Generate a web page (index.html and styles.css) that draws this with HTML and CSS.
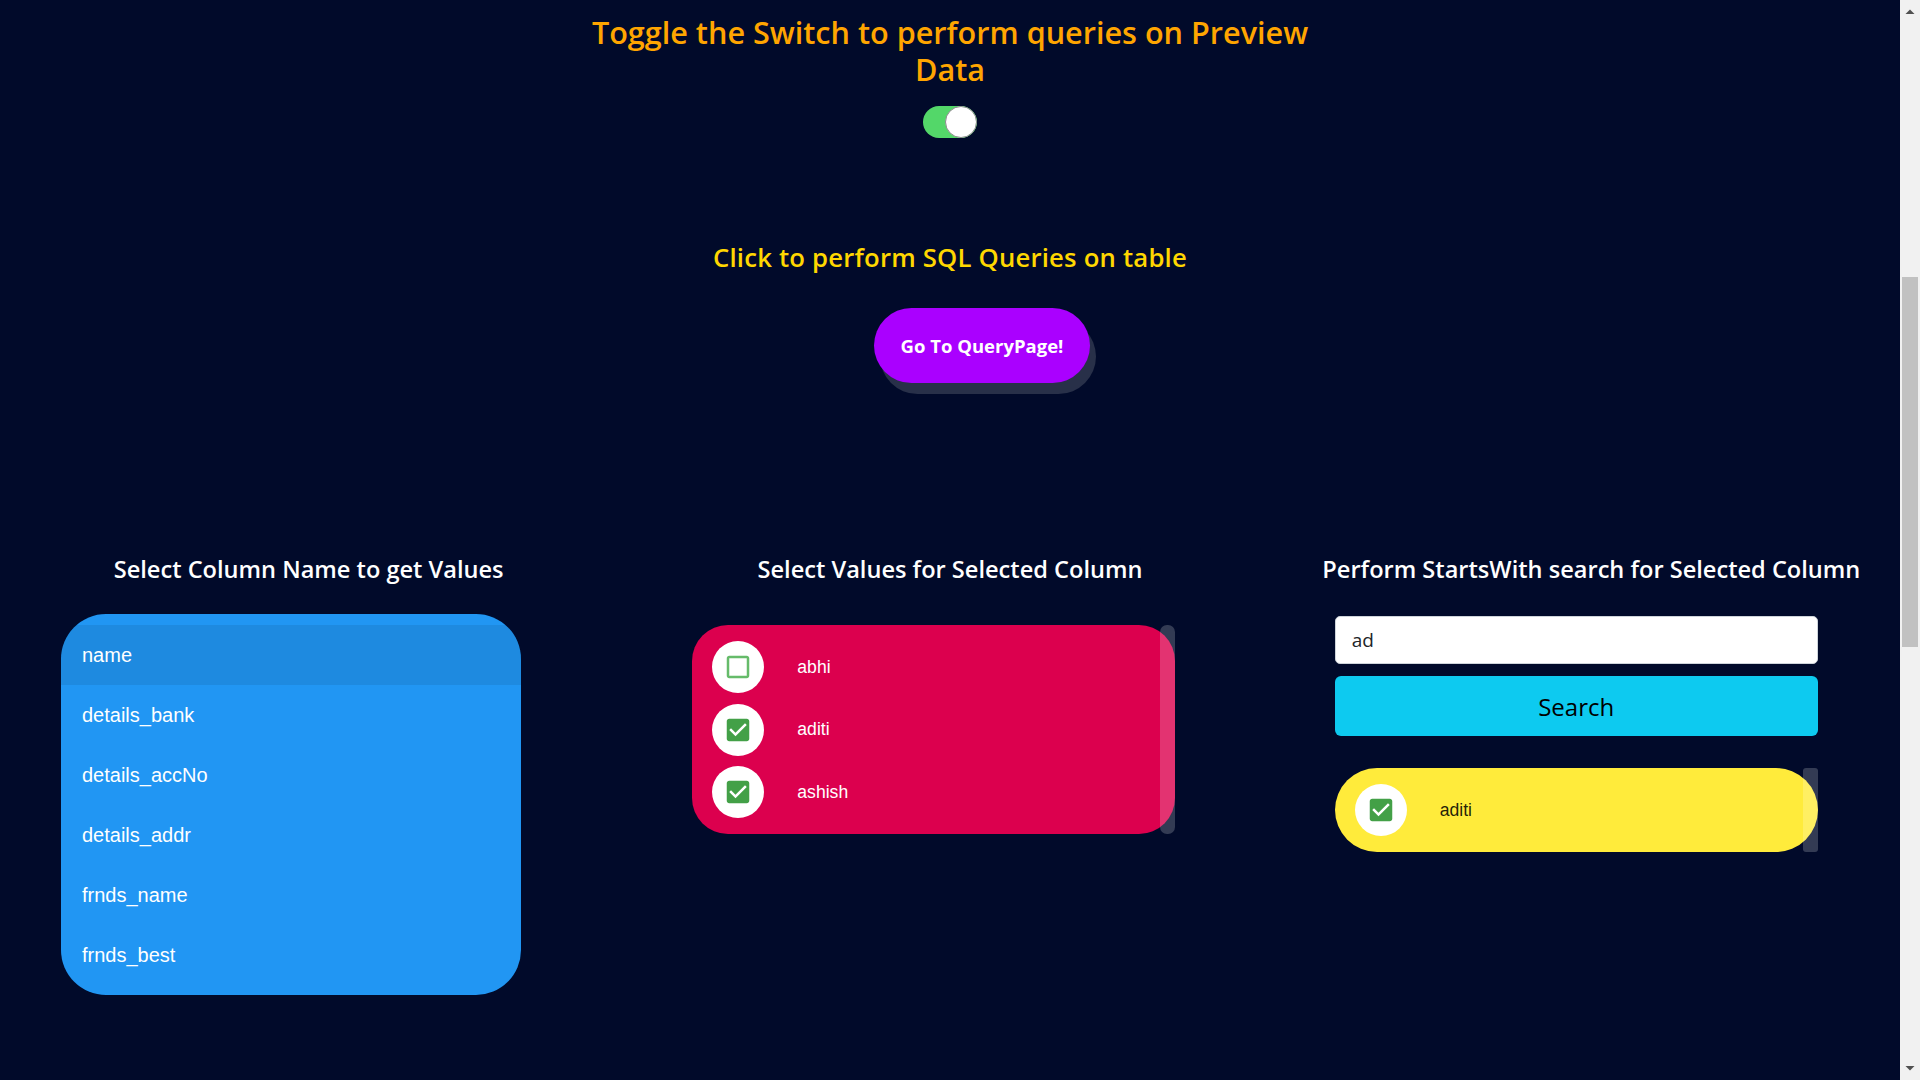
FILE: index.html
```html
<!DOCTYPE html>
<html lang="en">
<head>
<meta charset="utf-8">
<title>Preview Data Queries</title>
<link rel="stylesheet" href="styles.css">
</head>
<body>
<main class="page">
  <section class="toggle-section">
    <h2 class="toggle-title">Toggle the Switch to perform queries on Preview Data</h2>
    <div class="switch" role="switch" aria-checked="true"><span class="switch-knob"></span></div>
  </section>

  <section class="query-section">
    <h3 class="query-title">Click to perform SQL Queries on table</h3>
    <button class="query-btn" type="button">Go To QueryPage!</button>
  </section>

  <div class="columns">
    <div class="column">
      <h4 class="col-title">Select Column Name to get Values</h4>
      <ul class="name-list">
        <li class="name-item selected">name</li>
        <li class="name-item">details_bank</li>
        <li class="name-item">details_accNo</li>
        <li class="name-item">details_addr</li>
        <li class="name-item">frnds_name</li>
        <li class="name-item">frnds_best</li>
      </ul>
    </div>

    <div class="column">
      <h4 class="col-title">Select Values for Selected Column</h4>
      <div class="list-wrap values-wrap">
        <ul class="check-list red-list">
          <li class="check-item">
            <span class="check-circle">
              <svg class="check-icon unchecked" viewBox="0 0 24 24"><path d="M19 5v14H5V5h14m0-2H5c-1.1 0-2 .9-2 2v14c0 1.1.9 2 2 2h14c1.1 0 2-.9 2-2V5c0-1.1-.9-2-2-2z"/></svg>
            </span>
            <span class="check-label">abhi</span>
          </li>
          <li class="check-item">
            <span class="check-circle">
              <svg class="check-icon" viewBox="0 0 24 24"><path d="M19 3H5c-1.11 0-2 .9-2 2v14c0 1.1.89 2 2 2h14c1.11 0 2-.9 2-2V5c0-1.1-.89-2-2-2zm-9 14l-5-5 1.41-1.41L10 14.17l7.59-7.59L19 8l-9 9z"/></svg>
            </span>
            <span class="check-label">aditi</span>
          </li>
          <li class="check-item">
            <span class="check-circle">
              <svg class="check-icon" viewBox="0 0 24 24"><path d="M19 3H5c-1.11 0-2 .9-2 2v14c0 1.1.89 2 2 2h14c1.11 0 2-.9 2-2V5c0-1.1-.89-2-2-2zm-9 14l-5-5 1.41-1.41L10 14.17l7.59-7.59L19 8l-9 9z"/></svg>
            </span>
            <span class="check-label">ashish</span>
          </li>
        </ul>
        <span class="track"></span>
      </div>
    </div>

    <div class="column">
      <h4 class="col-title">Perform StartsWith search for Selected Column</h4>
      <div class="search-box">
        <input class="search-input" type="text" value="ad">
        <button class="search-btn" type="button">Search</button>
      </div>
      <div class="list-wrap result-wrap">
        <ul class="check-list yellow-list">
          <li class="check-item">
            <span class="check-circle">
              <svg class="check-icon" viewBox="0 0 24 24"><path d="M19 3H5c-1.11 0-2 .9-2 2v14c0 1.1.89 2 2 2h14c1.11 0 2-.9 2-2V5c0-1.1-.89-2-2-2zm-9 14l-5-5 1.41-1.41L10 14.17l7.59-7.59L19 8l-9 9z"/></svg>
            </span>
            <span class="check-label">aditi</span>
          </li>
        </ul>
        <span class="track track-dark"></span>
      </div>
    </div>
  </div>

  <section class="next-section">
    <h4 class="col-title">Select Columns and Values to build the table below</h4>
  </section>
</main>

<div class="scrollbar" aria-hidden="true">
  <span class="sb-arrow">
    <svg width="20" height="17" viewBox="0 0 20 17"><polygon points="5.5,14 14.5,14 10,9.5" fill="#505050"/></svg>
  </span>
  <span class="sb-track"><span class="sb-thumb"></span></span>
  <span class="sb-arrow">
    <svg width="20" height="17" viewBox="0 0 20 17"><polygon points="5.5,3 14.5,3 10,7.5" fill="#505050"/></svg>
  </span>
</div>
</body>
</html>
```

FILE: styles.css
```css
* {
  box-sizing: border-box;
}

html {
  background: #010a2a;
}

body {
  margin: 0;
  background: #010a2a;
  color: #ffffff;
  font-family: "Open Sans", "Noto Sans", sans-serif;
}

.page {
  width: calc(100% - 20px);
  padding-top: 14px;
}

/* ---------- fake browser scrollbar ---------- */
.scrollbar {
  position: fixed;
  top: 0;
  right: 0;
  bottom: 0;
  width: 20px;
  display: flex;
  flex-direction: column;
  background: #f1f1f1;
}

.sb-arrow {
  display: block;
  height: 17px;
  flex: none;
}

.sb-arrow svg {
  display: block;
}

.sb-track {
  display: block;
  flex: 1;
  padding: 260px 2px 0 2px;
}

.sb-thumb {
  display: block;
  height: 370px;
  background: #c1c1c1;
}

/* ---------- toggle ---------- */
.toggle-section {
  text-align: center;
}

.toggle-title {
  width: 40%;
  margin: 0 auto;
  color: #ffa500;
  font-size: 30.6px;
  font-weight: 600;
  line-height: 37px;
}

.switch {
  position: relative;
  width: 54px;
  height: 32px;
  margin: 18px auto 0;
  border-radius: 16px;
  background: #53d769;
}

.switch-knob {
  position: absolute;
  top: 0;
  right: 0;
  width: 32px;
  height: 32px;
  border-radius: 50%;
  background: #ffffff;
  border: 1px solid #8c8c8c;
}

/* ---------- query ---------- */
.query-section {
  text-align: center;
}

.query-title {
  margin: 103px 0 0;
  color: #ffd700;
  font-size: 25.7px;
  font-weight: 600;
  line-height: 34px;
  letter-spacing: 0.2px;
}

.query-btn {
  display: inline-block;
  width: 216px;
  height: 75px;
  margin: 33px 0 0 64px;
  border: none;
  border-radius: 38px;
  background: #aa00ff;
  color: #ffffff;
  font-family: "Open Sans", "Noto Sans", sans-serif;
  font-size: 18.5px;
  font-weight: 700;
  box-shadow: 6px 11px 0 #283049;
}

/* ---------- columns ---------- */
.columns {
  display: grid;
  grid-template-columns: repeat(3, 1fr);
  column-gap: 24px;
  align-items: start;
  margin-top: 172px;
}

.column {
  min-width: 0;
}

.col-title {
  margin: 0;
  text-align: center;
  color: #ffffff;
  font-size: 23.6px;
  font-weight: 600;
  line-height: 28px;
}

/* column names list */
.name-list {
  list-style: none;
  width: 460px;
  margin: 31px 0 0 61px;
  padding: 11px 0 10px;
  border-radius: 45px;
  overflow: hidden;
  background: #2196f3;
}

.name-item {
  height: 60px;
  padding-left: 21px;
  line-height: 60px;
  font-family: "Liberation Sans", Arial, sans-serif;
  font-size: 20px;
  color: #ffffff;
}

.name-item.selected {
  background: rgba(0, 0, 0, 0.08);
}

/* check lists */
.list-wrap {
  position: relative;
  width: 483px;
}

.values-wrap {
  margin: 42px 0 0 51px;
}

.check-list {
  list-style: none;
  margin: 0;
  padding: 16px 0;
  display: flex;
  flex-direction: column;
  gap: 10.5px;
}

.red-list {
  background: #dc004e;
  border-radius: 36px;
}

.yellow-list {
  background: #ffeb3b;
  border-radius: 42px;
}

.check-item {
  display: flex;
  align-items: center;
  padding-left: 20px;
}

.check-circle {
  display: flex;
  align-items: center;
  justify-content: center;
  width: 52px;
  height: 52px;
  flex: none;
  border-radius: 50%;
  background: #ffffff;
}

.check-icon {
  width: 30px;
  height: 30px;
  fill: #43a047;
}

.check-icon.unchecked {
  fill: #66bb6a;
}

.check-label {
  margin-left: 33px;
  font-family: "Liberation Sans", Arial, sans-serif;
  font-size: 17.6px;
  color: #ffffff;
}

.yellow-list .check-label {
  color: rgba(0, 0, 0, 0.87);
}

.track {
  position: absolute;
  top: 0;
  right: 0;
  bottom: 0;
  width: 15px;
  border-radius: 7px;
  background: rgba(255, 255, 255, 0.2);
}

.track-dark {
  border-radius: 3px;
}

/* search */
.search-box {
  width: 483px;
  margin: 33px 0 0 52px;
}

.search-input {
  display: block;
  width: 100%;
  height: 48px;
  padding: 0 16px;
  border: 1px solid #ced4da;
  border-radius: 5px;
  background: #ffffff;
  color: #212529;
  font-family: "Open Sans", "Noto Sans", sans-serif;
  font-size: 19px;
}

.search-btn {
  display: block;
  width: 100%;
  height: 60px;
  margin-top: 12px;
  border: none;
  border-radius: 6px;
  background: #0dcaf0;
  color: #000000;
  font-family: "Open Sans", "Noto Sans", sans-serif;
  font-size: 24px;
}

.result-wrap {
  margin: 32px 0 0 52px;
}

/* next section */
.next-section {
  margin-top: 81px;
  padding-bottom: 200px;
}
```
